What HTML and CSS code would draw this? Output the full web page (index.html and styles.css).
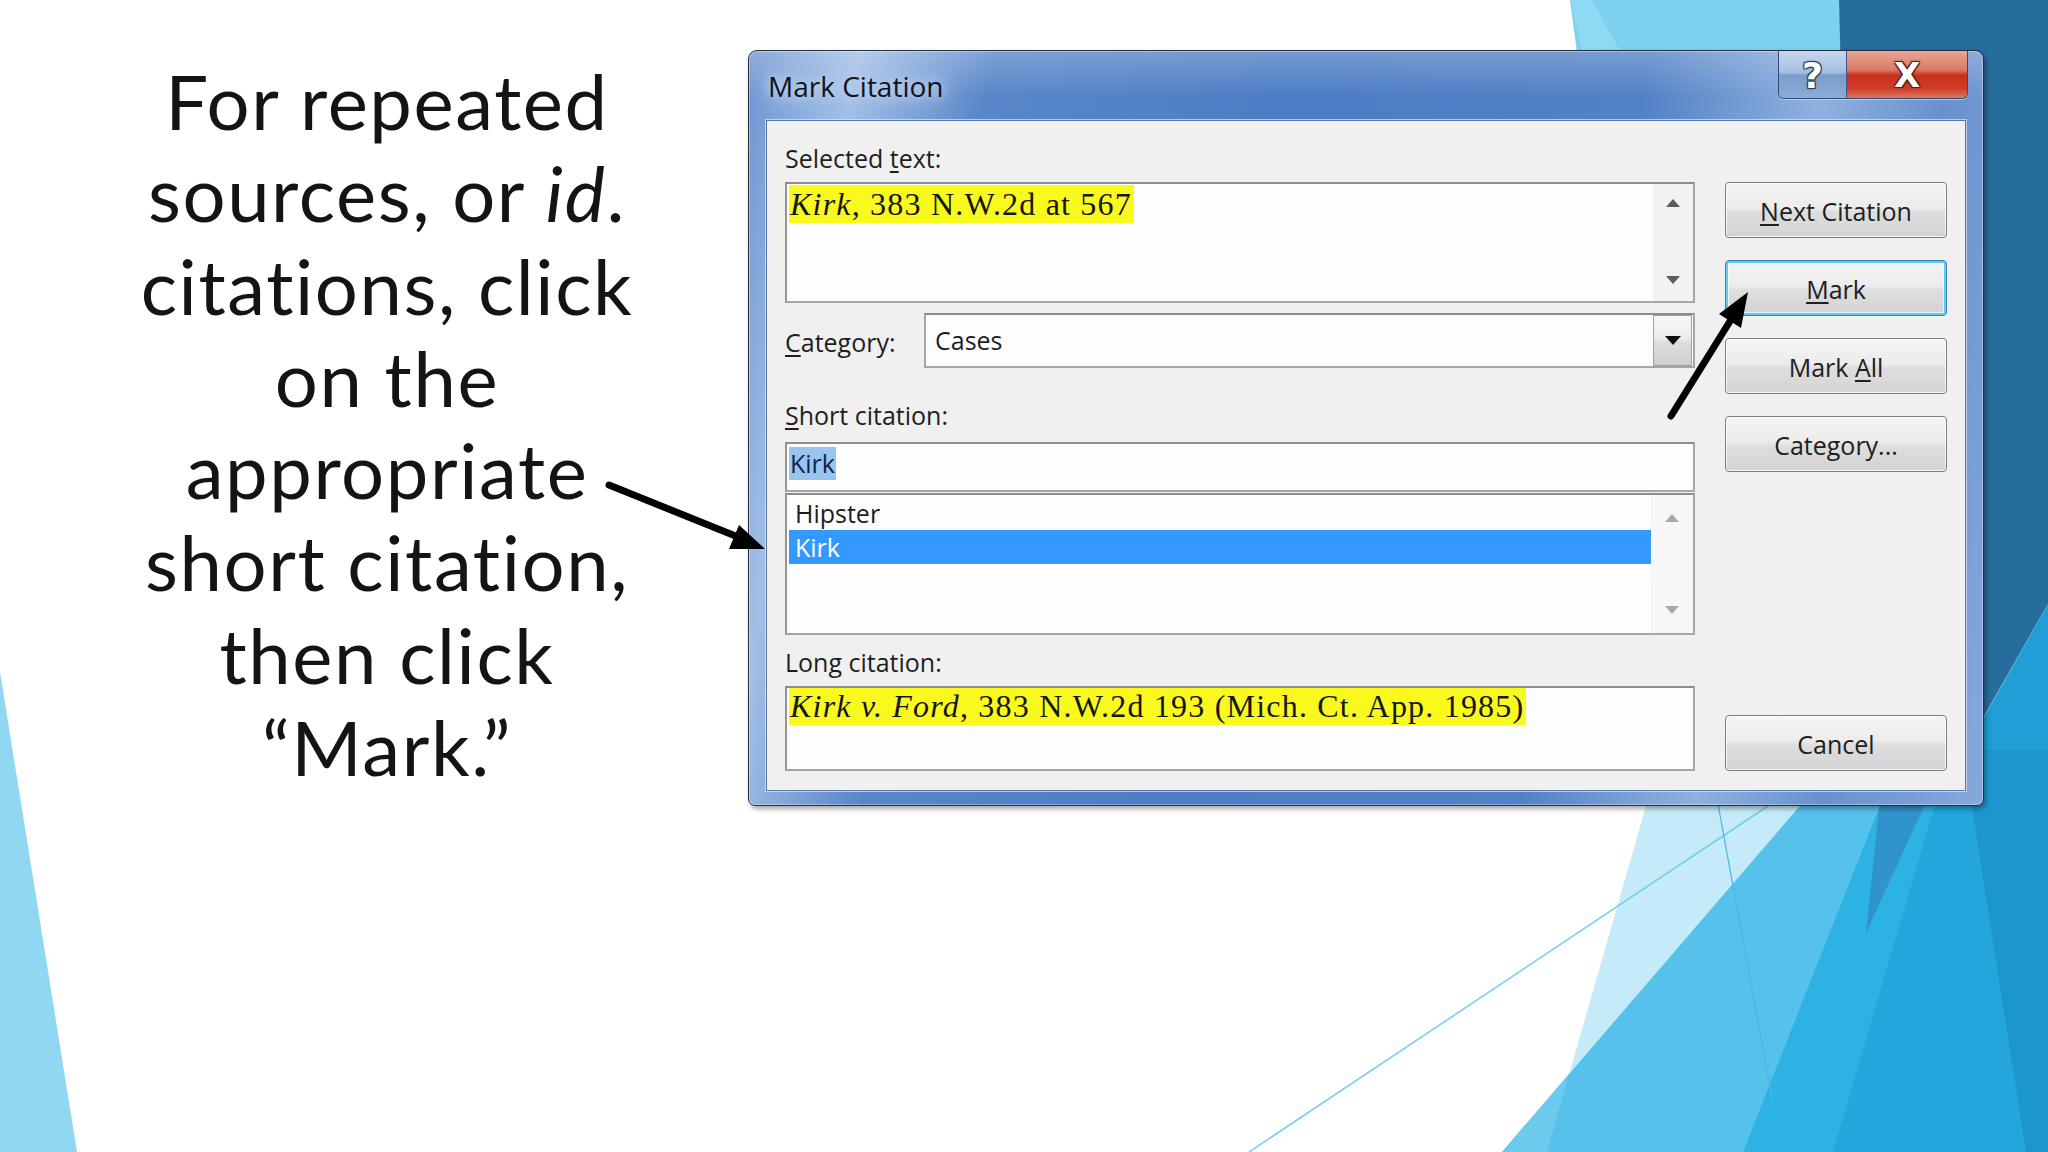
FILE: index.html
```html
<!DOCTYPE html>
<html lang="en">
<head>
<meta charset="utf-8">
<title>Mark Citation</title>
<link rel="stylesheet" href="styles.css">
</head>
<body>
<svg class="backdrop" viewBox="0 0 2048 1152" width="2048" height="1152" aria-hidden="true">
  <polygon points="0,672 77,1152 0,1152" fill="#8fd7f2"/>
  <polygon points="1570,0 1839,0 1860,300 1610,300" fill="#7dd1ee"/>
  <polygon points="1570,0 1592,0 1625,60 1584,60" fill="#8ed9f3"/>
  <polygon points="1839,0 2048,0 2048,604 1925,820 1860,820" fill="#266c9c"/>
  <polygon points="2048,604 2048,830 1920,830" fill="#1f9fd5"/>
  <polygon points="1662,750 1950,750 1950,1152 1547,1152" fill="#c6ebf8"/>
  <polygon points="1848,750 2048,750 2048,1152 1502,1152" fill="#56c1ea"/>
  <polygon points="1569,1074 1547,1152 1502,1152" fill="#6ccbec"/>
  <polygon points="1902,750 2048,750 2048,1152 1743,1152" fill="#2db3e3"/>
  <polygon points="1951,750 2048,750 2048,1152 1833,1152" fill="#22a6dc"/>
  <polygon points="1963,750 2048,750 2048,1152 2026,1152" fill="#1c97cd"/>
  <polygon points="1885,750 1950,750 1866,933" fill="#3193cd"/>
  <line x1="1927" y1="700" x2="1249" y2="1152" stroke="#6fcdee" stroke-width="1.5"/>
  <line x1="1708" y1="750" x2="1773" y2="1103" stroke="#48b7e2" stroke-width="1.2"/>
</svg>

<main class="slide">
  <p class="caption">For repeated<br>sources, or <i>id</i>.<br>citations, click<br>on the<br>appropriate<br>short citation,<br>then click<br>“Mark.”</p>

  <section class="dialog">
    <header class="titlebar">
      <span class="title">Mark Citation</span>
      <div class="capbtns">
        <span class="cb help">?</span>
        <span class="cb close">X</span>
      </div>
    </header>
    <div class="client">
      <div class="fields">
        <div class="lbl">Selected <u>t</u>ext:</div>
        <div class="box sel-box">
          <div class="box-text"><span class="hl"><i>Kirk</i>, 383 N.W.2d at 567</span></div>
          <div class="scroll"><span class="tri up"></span><span class="tri down"></span></div>
        </div>
        <div class="cat-row">
          <div class="lbl cat-lbl"><u>C</u>ategory:</div>
          <div class="combo">
            <span class="combo-val">Cases</span>
            <span class="dd"><span class="tri down dark"></span></span>
          </div>
        </div>
        <div class="lbl short-lbl"><u>S</u>hort citation:</div>
        <div class="box input"><span class="selword">Kirk</span></div>
        <div class="box list">
          <ul class="items">
            <li>Hipster</li>
            <li class="on">Kirk</li>
          </ul>
          <div class="scroll list-scroll"><span class="tri up light"></span><span class="tri down light"></span></div>
        </div>
        <div class="lbl long-lbl">Long citation:</div>
        <div class="box long-box">
          <div class="box-text"><span class="hl hl-long"><i>Kirk v. Ford</i>, 383 N.W.2d 193 (Mich. Ct. App. 1985)</span></div>
        </div>
      </div>
      <div class="buttons">
        <div class="btn"><u>N</u>ext Citation</div>
        <div class="btn focus"><u>M</u>ark</div>
        <div class="btn">Mark <u>A</u>ll</div>
        <div class="btn">Cate<u>g</u>ory...</div>
        <div class="btn cancel">Cancel</div>
      </div>
    </div>
  </section>
</main>

<svg class="arrows" viewBox="0 0 2048 1152" width="2048" height="1152" aria-hidden="true">
  <line x1="609" y1="485" x2="738" y2="537" stroke="#000" stroke-width="7" stroke-linecap="round"/>
  <polygon points="765,549 729,549 739,525" fill="#000"/>
  <line x1="1671" y1="416" x2="1732" y2="318" stroke="#000" stroke-width="7" stroke-linecap="round"/>
  <polygon points="1748,292 1741,328 1719,314" fill="#000"/>
</svg>
</body>
</html>
```

FILE: styles.css
```css
html, body {
  margin: 0;
  padding: 0;
}

body {
  width: 2048px;
  height: 1152px;
  overflow: hidden;
  position: relative;
  background: #ffffff;
  font-family: "Open Sans", "Noto Sans", sans-serif;
  color: #1b1b1b;
}

.backdrop {
  position: absolute;
  left: 0;
  top: 0;
  z-index: 0;
}

.arrows {
  position: absolute;
  left: 0;
  top: 0;
  z-index: 3;
  pointer-events: none;
}

.slide {
  position: relative;
  z-index: 1;
  display: flex;
  align-items: flex-start;
  padding-top: 50px;
}

/* ---------- slide caption ---------- */
.caption {
  flex: none;
  width: 722px;
  margin: 5px 0 0 26px;
  text-align: center;
  font-family: "Lato", "Open Sans", sans-serif;
  font-size: 76px;
  line-height: 92.3px;
  letter-spacing: 1.6px;
  color: #141414;
}

/* ---------- dialog window ---------- */
.dialog {
  flex: none;
  box-sizing: border-box;
  width: 1236px;
  height: 756px;
  border: 1px solid #25303e;
  border-radius: 9px 9px 7px 7px;
  padding: 0 17px 17px 17px;
  display: flex;
  flex-direction: column;
  background:
    linear-gradient(to bottom, rgba(255,255,255,0.22) 0, rgba(255,255,255,0) 46px),
    linear-gradient(100deg, #6d94cf 0%, #8fb0e0 5%, #a3bfe6 8%, #5886c9 18%, #4c7dc4 40%, #5281c6 66%, #90b1df 79%, #6891ce 88%, #86a8dc 100%);
  box-shadow: 2px 3px 5px rgba(0,0,0,0.35), inset 0 0 0 1px rgba(255,255,255,0.35);
}

.titlebar {
  flex: none;
  height: 69px;
  display: flex;
  align-items: flex-start;
}

.title {
  padding-top: 18px;
  margin-left: 2px;
  font-size: 28px;
  line-height: 34px;
  color: #0f141c;
  text-shadow: 0 0 10px #c7d8f0, 0 0 18px #c7d8f0, 0 0 26px #b9cfee;
}

.capbtns {
  margin-left: auto;
  margin-right: -2px;
  display: flex;
  height: 47px;
  border: 1px solid #2f4a72;
  border-top: none;
  border-radius: 0 0 6px 6px;
  overflow: hidden;
  box-shadow: 0 1px 0 rgba(255,255,255,0.45);
}

.cb {
  display: flex;
  align-items: center;
  justify-content: center;
  font-family: "DejaVu Sans", sans-serif;
  font-weight: bold;
  color: #ffffff;
  line-height: 1;
  text-shadow: 1px 1px 0 #2b3b55, -1px -1px 0 #2b3b55, 1px -1px 0 #2b3b55, -1px 1px 0 #2b3b55, 0 0 3px #2b3b55;
}

.help {
  width: 68px;
  font-size: 36px;
  padding-top: 2px;
  box-sizing: border-box;
  border-right: 1px solid #3d5a85;
  background: linear-gradient(to bottom, #c6d7ee 0%, #a7c0e3 45%, #7b9bcc 52%, #8eacd8 100%);
}

.close {
  width: 120px;
  font-size: 34px;
  text-shadow: 1px 1px 0 #5a1a12, -1px -1px 0 #5a1a12, 1px -1px 0 #5a1a12, -1px 1px 0 #5a1a12, 0 0 3px #5a1a12;
  background: linear-gradient(to bottom, #eaa797 0%, #dc7864 40%, #c8311c 52%, #d13e27 80%, #de7762 100%);
}

/* ---------- client area ---------- */
.client {
  flex: 1;
  display: flex;
  background: #f0f0f0;
  border: 1px solid #5a78a5;
  padding: 22px 18px 19px 18px;
  box-shadow: 0 0 0 1px rgba(220,232,248,0.7);
}

.fields {
  flex: none;
  width: 910px;
  display: flex;
  flex-direction: column;
}

.lbl {
  font-size: 25px;
  line-height: 30px;
  color: #1e1e1e;
}

.lbl u, .btn u {
  text-decoration-thickness: 1.5px;
  text-underline-offset: 3px;
}

.box {
  box-sizing: border-box;
  display: flex;
  background: #fdfdfd;
  border: 2px solid #a6a6a6;
  border-top-color: #8d8d8d;
  border-left-color: #959595;
}

.sel-box {
  margin-top: 9px;
  height: 121px;
}

.box-text {
  flex: 1;
  padding: 1px 0 0 2px;
}

.hl {
  display: inline-block;
  background: #f9f91e;
  font-family: "Liberation Serif", "Times New Roman", serif;
  font-size: 32px;
  line-height: 38px;
  letter-spacing: 1.2px;
  padding: 0 2px 0 1px;
  color: #161616;
}

.hl-long {
  line-height: 37px;
}

.scroll {
  flex: none;
  width: 40px;
  background: #f2f2f2;
  display: flex;
  flex-direction: column;
  align-items: center;
  justify-content: space-between;
  padding: 15px 0 17px;
  box-sizing: border-box;
}

.tri {
  width: 0;
  height: 0;
  border-left: 7px solid transparent;
  border-right: 7px solid transparent;
}

.tri.up {
  border-bottom: 8px solid #5c5c5c;
}

.tri.down {
  border-top: 8px solid #5c5c5c;
}

.tri.light.up {
  border-bottom-color: #a8a8a8;
}

.tri.light.down {
  border-top-color: #a8a8a8;
}

.tri.dark.down {
  border-left-width: 8px;
  border-right-width: 8px;
  border-top: 9px solid #101010;
}

.cat-row {
  margin-top: 10px;
  height: 55px;
  display: flex;
}

.cat-lbl {
  width: 139px;
  flex: none;
  margin-top: 14px;
}

.combo {
  flex: 1;
  box-sizing: border-box;
  display: flex;
  background: #fdfdfd;
  border: 2px solid #a6a6a6;
  border-top-color: #8d8d8d;
}

.combo-val {
  flex: 1;
  padding-left: 9px;
  font-size: 25px;
  line-height: 51px;
  color: #1e1e1e;
}

.dd {
  flex: none;
  width: 37px;
  margin-right: 1px;
  border: 1px solid #a0a0a0;
  background: linear-gradient(to bottom, #f6f6f6 0%, #ececec 45%, #dcdcdc 55%, #d0d0d0 100%);
  display: flex;
  align-items: center;
  justify-content: center;
}

.short-lbl {
  margin-top: 32px;
}

.input {
  margin-top: 12px;
  height: 50px;
  align-items: flex-start;
}

.selword {
  margin: 3px 0 0 2px;
  padding: 0 1px;
  background: #98c5ee;
  color: #13234a;
  font-size: 25px;
  line-height: 33px;
}

.list {
  margin-top: 1px;
  height: 142px;
}

.items {
  flex: 1;
  list-style: none;
  margin: 0;
  padding: 1px 0 0 2px;
}

.items li {
  height: 34px;
  line-height: 34px;
  font-size: 25px;
  padding-left: 6px;
  color: #1e1e1e;
}

.items li.on {
  background: #3399ff;
  color: #ffffff;
}

.list-scroll {
  width: 42px;
  padding: 19px 0 19px;
  background: #f7f7f7;
}

.long-lbl {
  margin-top: 12px;
}

.long-box {
  margin-top: 9px;
  height: 85px;
}

.long-box .box-text {
  padding-top: 0;
}

/* ---------- buttons ---------- */
.buttons {
  flex: none;
  width: 222px;
  margin-left: 30px;
  padding-top: 39px;
  display: flex;
  flex-direction: column;
}

.btn {
  box-sizing: border-box;
  height: 56px;
  margin-bottom: 22px;
  padding-top: 3px;
  border: 1px solid #7e7e7e;
  border-radius: 4px;
  background: linear-gradient(to bottom, #f4f4f4 0%, #ececec 46%, #dedede 54%, #d3d3d3 100%);
  box-shadow: inset 0 0 0 1px rgba(255,255,255,0.75);
  text-align: center;
  font-size: 25px;
  line-height: 50px;
  color: #202020;
}

.btn.focus {
  border-color: #3a82b6;
  box-shadow: inset 0 0 0 2px #5fcbf0, inset 0 0 0 3px rgba(255,255,255,0.6);
}

.btn.cancel {
  margin-top: auto;
  margin-bottom: 0;
}
```
